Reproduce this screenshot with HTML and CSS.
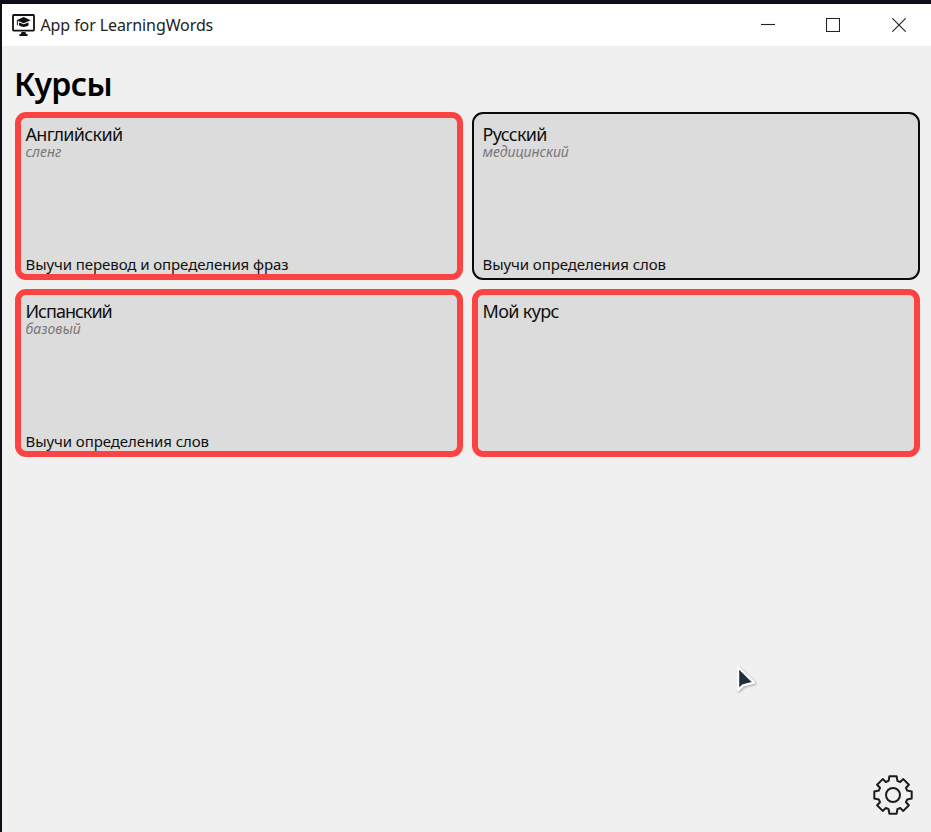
FILE: index.html
```html
<!DOCTYPE html>
<html lang="ru">
<head>
<meta charset="utf-8">
<title>App for LearningWords</title>
<link rel="stylesheet" href="styles.css">
</head>
<body>
<div class="window">
  <header class="titlebar">
    <svg class="app-icon" viewBox="0 0 23 22" width="23" height="22">
      <rect x="1" y="1" width="21" height="15.6" rx=".8" fill="#fff" stroke="#111" stroke-width="1.8"/>
      <path d="M4.5 6.3 11.7 3l7 3.3-7 3z M7 8.6l4.7 1.6 4.8-1.6v3q-4.8 2.6-9.5 0z" fill="#111"/>
      <path d="M5.4 6.5v4.8" stroke="#111" stroke-width="1"/>
      <path d="M9.5 18h4l.6 2h1.4v2H7.5v-2h1.4z" fill="#111"/>
    </svg>
    <span class="app-title">App for LearningWords</span>
    <div class="controls">
      <svg viewBox="0 0 14 14" width="14" height="14"><path d="M0 6.5h14"/></svg>
      <svg viewBox="0 0 14 14" width="14" height="14"><path d="M.5.5h13v13H.5z"/></svg>
      <svg viewBox="0 0 14 14" width="14" height="14"><path d="M.3.3l13.4 13.4M13.7.3L.3 13.7"/></svg>
    </div>
  </header>
  <main class="content">
    <h1>Курсы</h1>
    <div class="courses">
      <section class="card">
        <h2>Английский</h2>
        <p class="kind">сленг</p>
        <p class="about">Выучи перевод и определения фраз</p>
      </section>
      <section class="card plain">
        <h2>Русский</h2>
        <p class="kind">медицинский</p>
        <p class="about">Выучи определения слов</p>
      </section>
      <section class="card">
        <h2 class="tight">Испанский</h2>
        <p class="kind">базовый</p>
        <p class="about">Выучи определения слов</p>
      </section>
      <section class="card">
        <h2>Мой курс</h2>
      </section>
    </div>
    <svg class="gear" viewBox="-20 -20 40 40" width="40" height="40">
      <path d="M-3.6-18.7H3.6L4.4-14.2 7.2-13 10.3-15.9 15.9-10.3 13-7.2 14.2-4.4 18.7-3.6V3.6L14.2 4.4 13 7.2 15.9 10.3 10.3 15.9 7.2 13 4.4 14.2 3.6 18.7H-3.6L-4.4 14.2-7.2 13-10.3 15.9-15.9 10.3-13 7.2-14.2 4.4-18.7 3.6V-3.6L-14.2-4.4-13-7.2-15.9-10.3-10.3-15.9-7.2-13-4.4-14.2Z"/>
      <circle r="7"/>
    </svg>
  </main>
</div>
<svg class="cursor" viewBox="0 0 24 30" width="24" height="30">
  <path d="M3 3v23l5.2-4.6L19 18.6z"/>
</svg>
</body>
</html>
```
FILE: styles.css
```css
* { box-sizing: border-box; margin: 0; padding: 0; }
body {
  width: 931px;
  height: 832px;
  overflow: hidden;
  background: #0d0e17;
  font-family: "Noto Sans", "Open Sans", sans-serif;
  color: #101010;
}
.window {
  height: 832px;
  border-top: 4px solid #0d0e17;
  border-left: 2px solid #0d0e17;
  background: #f0f0f0;
  display: flex;
  flex-direction: column;
}
.titlebar {
  height: 42px;
  background: #fff;
  display: flex;
  align-items: center;
  padding: 0 25px 0 10px;
}
.app-icon { margin-right: 5.5px; }
.app-title { font-size: 16px; white-space: nowrap; letter-spacing: -.1px; color: #222; }
.controls { margin-left: auto; display: flex; gap: 51px; }
.controls svg { fill: none; stroke: #222; stroke-width: 1.1; }
.controls svg:last-child { margin-left: 1px; }
.content {
  flex: 1;
  display: flex;
  flex-direction: column;
  padding: 16px 11px 17px 13px;
}
h1 { height: 50px; line-height: 44px; font-size: 32px; font-weight: 600; letter-spacing: -.6px; margin-left: -1px; color: #000; }
.courses {
  display: grid;
  grid-template-columns: 448px 448px;
  grid-auto-rows: 168px;
  gap: 9px;
}
.card {
  border: 6px solid #fc4343;
  border-radius: 11px;
  background: #dcdcdc;
  padding: 6px 5px 0 4.5px;
  display: flex;
  flex-direction: column;
  white-space: nowrap;
  align-items: flex-start;
}
.card.plain { border: 2px solid #0b0b0e; padding: 10px 9px 4px 8.5px; }
h2 { font-size: 18px; font-weight: 400; line-height: 20px; letter-spacing: -.66px; }
h2.tight { letter-spacing: -1px; }
.kind { font-size: 14px; line-height: 15px; font-style: italic; color: #777; }
.about { margin-top: auto; font-size: 15px; line-height: 19px; letter-spacing: -.08px; }
.gear {
  margin: auto 7px 0 auto;
  fill: none;
  stroke: #1c1c1c;
  stroke-width: 2;
  stroke-linejoin: round;
}
.cursor {
  position: absolute;
  left: 735px;
  top: 664px;
  fill: #232f38;
  stroke: #fff;
  stroke-width: 2.4;
  stroke-linejoin: round;
  filter: drop-shadow(1px 1px 1px rgba(0, 0, 0, .3));
}
```
